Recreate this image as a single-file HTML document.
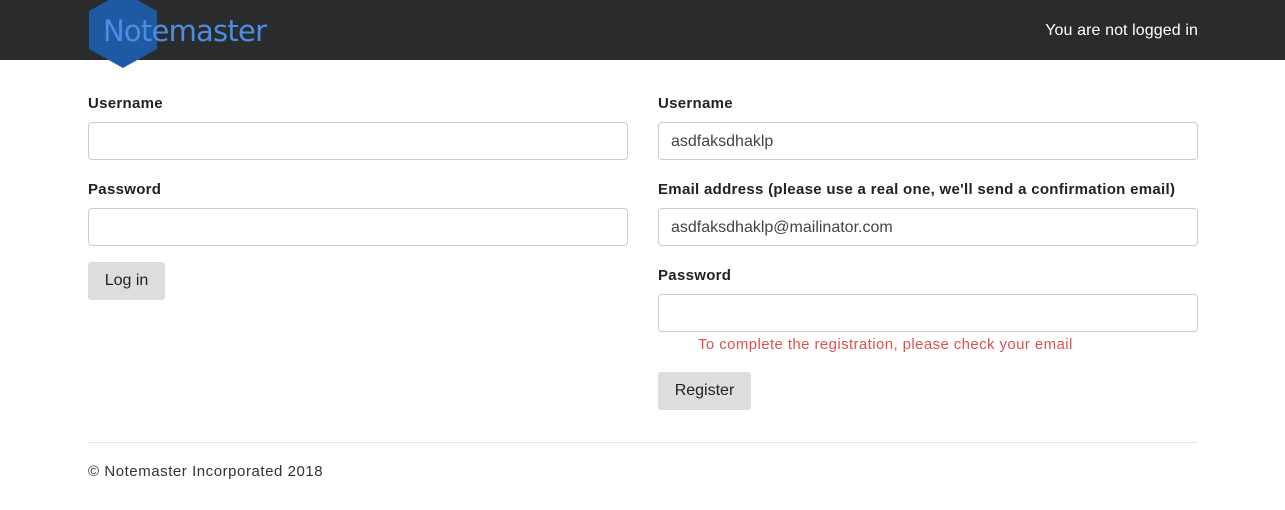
<!DOCTYPE html>
<html><head><style>
body{margin:0;font-family:"Liberation Sans",sans-serif;background:#fff;width:1285px;height:510px;overflow:hidden;position:relative;color:#222}
.nav{position:absolute;left:0;top:0;width:1285px;height:60px;background:#2a2b2d}
.logo{position:absolute;left:0;top:0}
.nl{position:absolute;right:87px;top:22px;color:#fff;font-size:16px;letter-spacing:0.1px}
label{position:absolute;font-weight:bold;font-size:15px;color:#222;letter-spacing:0.3px}
.in{position:absolute;width:540px;height:38px;border:1px solid #ccc;border-radius:4px;box-sizing:border-box;font-size:16px;color:#444;padding:10px 12px}
.btn{position:absolute;background:#ddd;border-radius:3px;font-size:16px;color:#222;height:38px;line-height:38px;text-align:center}
</style></head><body>
<div class="nav">
<svg class="logo" width="300" height="70" style="overflow:visible">
<polygon points="123,-8 157,11 157,49 123,68 89,49 89,11" fill="#1d5aa3"/>
<text x="103" y="41" font-family="DejaVu Sans, sans-serif" font-size="29" fill="#4b8de0" textLength="164">Notemaster</text>
</svg>
<div class="nl">You are not logged in</div>
</div>
<label style="left:88px;top:95px">Username</label>
<div class="in" style="left:88px;top:122px"></div>
<label style="left:88px;top:181px">Password</label>
<div class="in" style="left:88px;top:208px"></div>
<div class="btn" style="left:88px;top:262px;width:77px">Log in</div>

<label style="left:658px;top:95px">Username</label>
<div class="in" style="left:658px;top:122px">asdfaksdhaklp</div>
<label style="left:658px;top:181px">Email address (please use a real one, we'll send a confirmation email)</label>
<div class="in" style="left:658px;top:208px">asdfaksdhaklp@mailinator.com</div>
<label style="left:658px;top:267px">Password</label>
<div class="in" style="left:658px;top:294px"></div>
<div style="position:absolute;left:698px;top:336px;color:#d9534f;font-size:15px;letter-spacing:0.4px">To complete the registration, please check your email</div>
<div class="btn" style="left:658px;top:372px;width:93px">Register</div>

<div style="position:absolute;left:88px;top:442px;width:1110px;border-top:1px solid #e5e5e5"></div>
<div style="position:absolute;left:88px;top:463px;font-size:15px;color:#333;letter-spacing:0.55px">© Notemaster Incorporated 2018</div>
</body></html>
